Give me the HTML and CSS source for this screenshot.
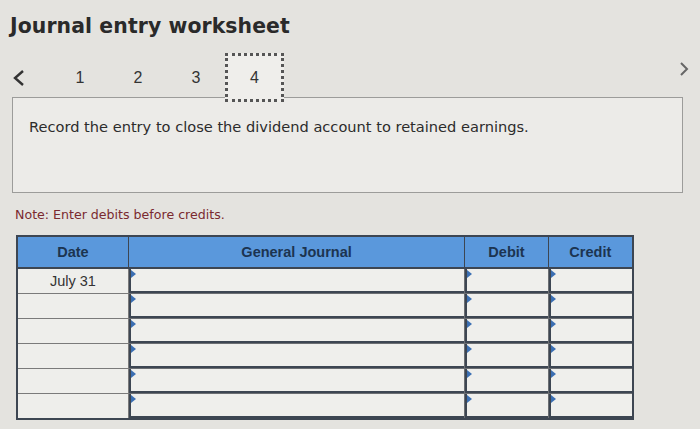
FILE: index.html
```html
<!DOCTYPE html>
<html>
<head>
<meta charset="utf-8">
<link rel="stylesheet" href="styles.css">
</head>
<body>
<div class="page">
  <h1 class="title">Journal entry worksheet</h1>
  <div class="nav">
    <span class="arrow">
      <svg width="14" height="18" viewBox="0 0 14 18"><path d="M11 2 L3 9 L11 16" fill="none" stroke="#333" stroke-width="2.4"/></svg>
    </span>
    <div class="tabs">
      <span class="tab">1</span>
      <span class="tab">2</span>
      <span class="tab">3</span>
      <span class="tab active">4</span>
    </div>
    <span class="arrow right">
      <svg width="12" height="18" viewBox="0 0 12 18"><path d="M3 3 L9 9 L3 15" fill="none" stroke="#666" stroke-width="2"/></svg>
    </span>
  </div>
  <div class="prompt">Record the entry to close the dividend account to retained earnings.</div>
  <div class="note">Note: Enter debits before credits.</div>
  <table class="journal">
    <thead>
      <tr><th class="c-date">Date</th><th class="c-gj">General Journal</th><th class="c-dr">Debit</th><th class="c-cr">Credit</th></tr>
    </thead>
    <tbody>
      <tr><td class="date">July 31</td><td><div class="inp"></div></td><td><div class="inp"></div></td><td><div class="inp"></div></td></tr>
      <tr><td class="date"></td><td><div class="inp"></div></td><td><div class="inp"></div></td><td><div class="inp"></div></td></tr>
      <tr><td class="date"></td><td><div class="inp"></div></td><td><div class="inp"></div></td><td><div class="inp"></div></td></tr>
      <tr><td class="date"></td><td><div class="inp"></div></td><td><div class="inp"></div></td><td><div class="inp"></div></td></tr>
      <tr><td class="date"></td><td><div class="inp"></div></td><td><div class="inp"></div></td><td><div class="inp"></div></td></tr>
      <tr><td class="date"></td><td><div class="inp"></div></td><td><div class="inp"></div></td><td><div class="inp"></div></td></tr>
    </tbody>
  </table>
</div>
</body>
</html>
```
FILE: styles.css
```css
html, body {
  margin: 0;
  padding: 0;
}
body {
  background: #e4e3df;
  font-family: "DejaVu Sans", Verdana, sans-serif;
  color: #2c2c2c;
}
.page {
  width: 700px;
  height: 429px;
  overflow: hidden;
  padding-top: 12px;
  box-sizing: border-box;
}
.title {
  margin: 0 0 0 10px;
  font-size: 20.4px;
  font-weight: bold;
  line-height: 28px;
  color: #2a2a2a;
  letter-spacing: 0.1px;
}
.nav {
  display: flex;
  align-items: center;
  height: 49px;
  margin-top: 13px;
  padding-left: 12px;
  padding-right: 8px;
}
.arrow {
  display: flex;
  align-items: center;
  width: 14px;
}
.arrow.right {
  margin-left: auto;
  margin-top: -17px;
}
.tabs {
  display: flex;
  margin-left: 25px;
  height: 100%;
}
.tab {
  width: 58px;
  display: flex;
  align-items: center;
  justify-content: center;
  font-family: "Liberation Sans", Arial, sans-serif;
  font-size: 16px;
  color: #333;
}
.tab.active {
  box-sizing: border-box;
  width: 59px;
  border: 3px dotted #555;
  background: #efeeeb;
  position: relative;
  z-index: 1;
}
.prompt {
  margin: -5px 17px 0 12px;
  height: 96px;
  box-sizing: border-box;
  border: 1px solid #9c9c9a;
  background: #ecebe8;
  padding: 20px 0 0 16px;
  font-size: 14.6px;
  color: #2c2c2c;
}
.note {
  margin: 14px 0 0 15px;
  font-size: 12.6px;
  color: #7a2a30;
  line-height: 16px;
}
.journal {
  margin: 12px 0 0 16px;
  border-collapse: collapse;
  width: 618px;
  font-family: "Liberation Sans", Arial, sans-serif;
  border: 2px solid #3d4652;
}
.journal th {
  background: #5a98dc;
  color: #1c3450;
  font-size: 14.5px;
  font-weight: bold;
  height: 30px;
  padding: 0;
  border: 1px solid #3d4652;
  border-bottom: 2px solid #3d4652;
}
.c-date { width: 111px; }
.c-gj { width: 340px; }
.c-dr { width: 83px; }
.c-cr { width: 84px; }
.journal td {
  padding: 0;
  height: 24px;
  background: #eeeeeb;
  border: 1px solid #6b6e72;
  vertical-align: top;
}
.journal td.date {
  text-align: center;
  vertical-align: middle;
  font-size: 14.5px;
  color: #333;
  border-color: #7a7a7a;
}
.inp {
  position: relative;
  border-left: 2px solid #3d4652;
  border-bottom: 2px solid #3d4652;
  box-sizing: border-box;
  height: 24px;
  background: #efefec;
}
.inp::before {
  content: "";
  position: absolute;
  left: 0;
  top: 1px;
  border-top: 4px solid transparent;
  border-bottom: 4px solid transparent;
  border-left: 5px solid #3b6fb3;
}
```
